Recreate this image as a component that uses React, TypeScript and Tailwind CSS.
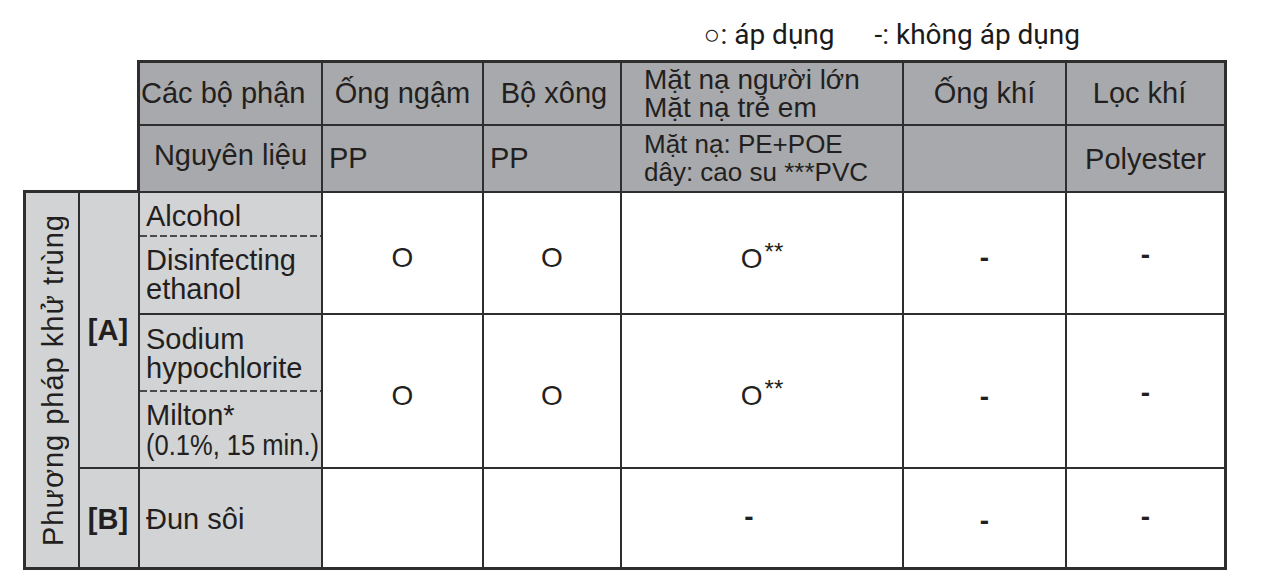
import type { ReactNode } from 'react';

const ink = 'text-[#231f20]';
const line = 'border-[#2e2e2e]';

// Base cell: right and bottom rules, the outer edges add their own
function Cell({
  className = '',
  children,
}: {
  className?: string;
  children?: ReactNode;
}): JSX.Element {
  return (
    <div className={`flex border-r-2 border-b-2 ${line} ${className}`}>
      {children}
    </div>
  );
}

function Dashed(): JSX.Element {
  return (
    <div className="mt-auto h-[2px] w-full bg-[repeating-linear-gradient(90deg,#4a4a4a_0_7px,transparent_7px_10px)]" />
  );
}

function Circle({ stars = false }: { stars?: boolean }): JSX.Element {
  return (
    <span className="flex items-start">
      <span className="text-[28px] leading-none">O</span>
      {stars && (
        <span className="ml-[2px] -mt-[5px] text-[24px] leading-none">**</span>
      )}
    </span>
  );
}

function Dash(): JSX.Element {
  return <span className="text-[28px] leading-none font-bold">-</span>;
}

export default function App(): JSX.Element {
  const head = 'bg-[#a7a9ac] border-t-[3px]';
  const head2 = 'bg-[#a7a9ac]';
  const side = 'bg-[#d1d3d4]';
  const mid = 'bg-white items-center justify-center';

  return (
    <div
      className={`min-h-screen w-[1268px] bg-white ${ink} font-['Liberation_Sans',Arial,sans-serif]`}
    >
      {/* Legend */}
      <div className="flex h-[60px] items-center justify-end gap-[40px] pt-[10px] pr-[188px] font-['Roboto','Liberation_Sans',sans-serif] text-[28px] leading-none text-[#1a1a1a]">
        <span>○: áp dụng</span>
        <span>-: không áp dụng</span>
      </div>

      <div className="pl-[23px]">
        <div className="grid grid-cols-[57px_60px_183px_161px_138px_282px_163px_160px] grid-rows-[66px_67px_44px_78px_77px_77px_101px] text-[29px] leading-[29px]">
          {/* Top-left blank */}
          <div className={`col-span-2 row-span-2 border-r-[3px] border-b-[3px] ${line}`} />

          {/* Header row 1 */}
          <Cell className={`${head} items-center pl-[1px] whitespace-nowrap`}>Các bộ phận</Cell>
          <Cell className={`${head} items-center justify-center whitespace-nowrap`}>Ống ngậm</Cell>
          <Cell className={`${head} items-center justify-center pl-[4px]`}>Bộ xông</Cell>
          <Cell className={`${head} flex-col justify-center pl-[22px] text-[28px] leading-[28px]`}>
            <span>Mặt nạ người lớn</span>
            <span>Mặt nạ trẻ em</span>
          </Cell>
          <Cell className={`${head} items-center justify-center`}>Ống khí</Cell>
          <Cell className={`${head} border-r-[3px] items-center justify-center pr-[12px]`}>
            Lọc khí
          </Cell>

          {/* Header row 2 */}
          <Cell className={`${head2} items-center justify-center pb-[6px] whitespace-nowrap`}>
            Nguyên liệu
          </Cell>
          <Cell className={`${head2} items-center pl-[6px]`}>PP</Cell>
          <Cell className={`${head2} items-center pl-[6px]`}>PP</Cell>
          <Cell className={`${head2} flex-col justify-center pl-[22px] pb-[2px] text-[26px] leading-[28px]`}>
            <span>Mặt nạ: PE+POE</span>
            <span>dây: cao su ***PVC</span>
          </Cell>
          <Cell className={head2} />
          <Cell className={`${head2} border-r-[3px] items-center justify-center pt-[2px]`}>
            Polyester
          </Cell>

          {/* Side labels */}
          <Cell className={`${side} row-span-5 border-l-[3px] border-b-[3px] items-center justify-center pl-[2px]`}>
            <span className="rotate-180 whitespace-nowrap text-[29px] tracking-[1px] [writing-mode:vertical-rl]">
              Phương pháp khử trùng
            </span>
          </Cell>
          <Cell className={`${side} row-span-4 items-center justify-center pr-[2px] font-bold`}>
            [A]
          </Cell>

          {/* Alcohol / Disinfecting ethanol */}
          <div className={`flex flex-col border-r-2 ${line} ${side}`}>
            <span className="pt-[9px] pl-[6px]">Alcohol</span>
            <Dashed />
          </div>
          <Cell className={`${mid} row-span-2 pt-[10px]`}>
            <Circle />
          </Cell>
          <Cell className={`${mid} row-span-2 pt-[10px]`}>
            <Circle />
          </Cell>
          <Cell className={`${mid} row-span-2 pt-[12px]`}>
            <Circle stars />
          </Cell>
          <Cell className={`${mid} row-span-2 pt-[10px]`}>
            <Dash />
          </Cell>
          <Cell className={`${mid} row-span-2 border-r-[3px] pt-[4px]`}>
            <Dash />
          </Cell>
          <Cell className={`${side} flex-col justify-center pl-[6px]`}>
            <span>Disinfecting</span>
            <span>ethanol</span>
          </Cell>

          {/* Sodium hypochlorite / Milton */}
          <div className={`flex flex-col border-r-2 ${line} ${side}`}>
            <div className="flex flex-1 flex-col justify-center pl-[6px] pt-[2px]">
              <span>Sodium</span>
              <span>hypochlorite</span>
            </div>
            <Dashed />
          </div>
          <Cell className={`${mid} row-span-2 pt-[10px]`}>
            <Circle />
          </Cell>
          <Cell className={`${mid} row-span-2 pt-[10px]`}>
            <Circle />
          </Cell>
          <Cell className={`${mid} row-span-2 pt-[10px]`}>
            <Circle stars />
          </Cell>
          <Cell className={`${mid} row-span-2 pt-[12px]`}>
            <Dash />
          </Cell>
          <Cell className={`${mid} row-span-2 border-r-[3px] pt-[4px]`}>
            <Dash />
          </Cell>
          <Cell className={`${side} flex-col justify-center pl-[6px] pt-[2px]`}>
            <span>Milton*</span>
            <span className="origin-left scale-x-[0.88] whitespace-nowrap leading-[31px]">
              (0.1%, 15 min.)
            </span>
          </Cell>

          {/* [B] Đun sôi */}
          <Cell className={`${side} border-b-[3px] items-center justify-center pr-[2px] pt-[2px] font-bold`}>
            [B]
          </Cell>
          <Cell className={`${side} border-b-[3px] items-center pl-[6px] pt-[2px]`}>Đun sôi</Cell>
          <Cell className="border-b-[3px] bg-white" />
          <Cell className="border-b-[3px] bg-white" />
          <Cell className={`${mid} border-b-[3px] pr-[26px] pb-[2px]`}>
            <Dash />
          </Cell>
          <Cell className={`${mid} border-b-[3px] pt-[6px]`}>
            <Dash />
          </Cell>
          <Cell className={`${mid} border-b-[3px] border-r-[3px] pb-[2px]`}>
            <Dash />
          </Cell>
        </div>
      </div>
    </div>
  );
}
